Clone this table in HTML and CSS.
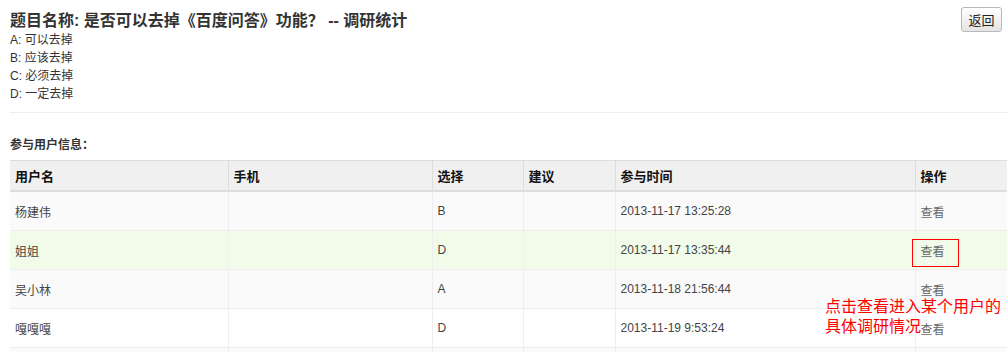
FILE: index.html
```html
<!DOCTYPE html>
<html lang="zh">
<head>
<meta charset="utf-8">
<title>调研统计</title>
<link rel="stylesheet" href="styles.css">
</head>
<body>
<div class="page">
  <div class="top">
    <div class="info">
      <h1 class="title">题目名称: 是否可以去掉《百度问答》功能？ -- 调研统计</h1>
      <div class="opt">A: 可以去掉</div>
      <div class="opt">B: 应该去掉</div>
      <div class="opt">C: 必须去掉</div>
      <div class="opt">D: 一定去掉</div>
    </div>
    <button class="back">返回</button>
  </div>
  <div class="rule"></div>
  <div class="section">参与用户信息：</div>
  <table class="grid">
    <colgroup>
      <col class="c1"><col class="c2"><col class="c3"><col class="c4"><col class="c5"><col class="c6">
    </colgroup>
    <thead>
      <tr><th>用户名</th><th>手机</th><th>选择</th><th>建议</th><th>参与时间</th><th>操作</th></tr>
    </thead>
    <tbody>
      <tr class="odd"><td>杨建伟</td><td></td><td>B</td><td></td><td>2013-11-17 13:25:28</td><td><a class="view">查看</a></td></tr>
      <tr class="hover"><td>姐姐</td><td></td><td>D</td><td></td><td>2013-11-17 13:35:44</td><td class="marked"><a class="view">查看</a><span class="redbox"></span></td></tr>
      <tr class="odd"><td>吴小林</td><td></td><td>A</td><td></td><td>2013-11-18 21:56:44</td><td><a class="view">查看</a></td></tr>
      <tr><td>嘎嘎嘎</td><td></td><td>D</td><td></td><td>2013-11-19 9:53:24</td><td><a class="view">查看</a></td></tr>
      <tr class="odd"><td>&nbsp;</td><td></td><td></td><td></td><td></td><td></td></tr>
    </tbody>
  </table>
  <div class="note">点击查看进入某个用户的<br>具体调研情况</div>
</div>
</body>
</html>
```
FILE: styles.css
```css
html, body {
  margin: 0;
  padding: 0;
  background: #fff;
  overflow: hidden;
}
body {
  font-family: "Liberation Sans", "Noto Sans CJK SC", sans-serif;
  color: #333;
  font-size: 12px;
}
.page {
  position: relative;
  padding: 10px 0 0 10px;
}
.top {
  display: flex;
  justify-content: space-between;
  align-items: flex-start;
}
.title {
  margin: 0;
  font-size: 16px;
  line-height: 21px;
  font-weight: bold;
  color: #333;
}
.opt {
  font-size: 12px;
  line-height: 18px;
  color: #333;
}
.back {
  margin: -3px 5px 0 0;
  width: 41px;
  height: 25px;
  padding: 0;
  font-family: "Noto Sans CJK SC", sans-serif;
  font-size: 13px;
  color: #222;
  background: linear-gradient(#ffffff, #e4e4e4);
  border: 1px solid #b8b8b8;
  border-radius: 3px;
}
.rule {
  height: 1px;
  background: #eee;
  margin-top: 9px;
}
.section {
  font-weight: bold;
  font-size: 12px;
  line-height: 18px;
  margin-top: 23px;
  margin-bottom: 6px;
}
.grid {
  border-collapse: collapse;
  width: 1010px;
  table-layout: fixed;
}
.c1 { width: 218px; }
.c2 { width: 204px; }
.c3 { width: 91px; }
.c4 { width: 92px; }
.c5 { width: 300px; }
.c6 { width: 105px; }
.grid th {
  background: #f0f0f0;
  text-align: left;
  font-size: 13px;
  font-weight: bold;
  color: #111;
  height: 29px;
  padding: 0 5px;
  border-top: 1px solid #ddd;
  border-bottom: 2px solid #ddd;
  border-left: 1px solid #ddd;
}
.grid th:first-child, .grid td:first-child { border-left: 0; }
.grid td {
  height: 38px;
  padding: 0 5px;
  font-size: 12px;
  color: #444;
  border-top: 1px solid #eee;
  border-left: 1px solid #eee;
  vertical-align: middle;
}
.grid tr.odd td { background: #fafafa; }
.grid tr.hover td { background: #f1fbea; }
.view {
  color: #666;
  text-decoration: none;
}
.marked { position: relative; }
.redbox {
  position: absolute;
  left: -4px;
  top: 8px;
  width: 45px;
  height: 26px;
  border: 1px solid #ff0000;
}
.note {
  position: absolute;
  left: 825px;
  top: 295px;
  font-family: "Noto Sans CJK SC", sans-serif;
  font-size: 16px;
  line-height: 20px;
  color: #f00;
}
```
